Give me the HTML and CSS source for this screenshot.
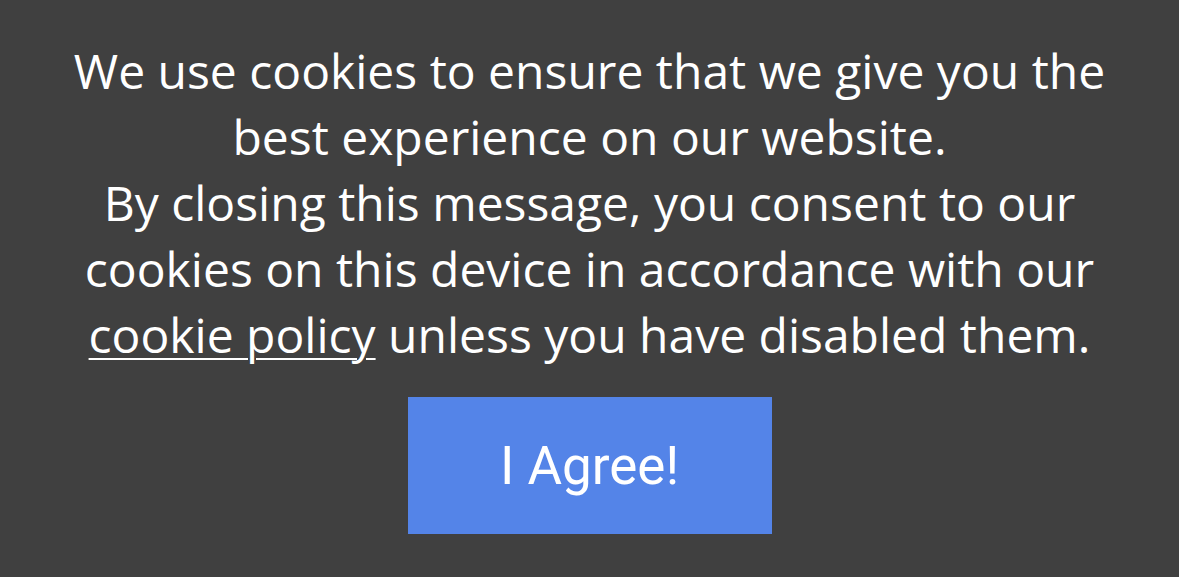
FILE: index.html
```html
<!DOCTYPE html>
<html>
<head>
<meta charset="utf-8">
<link rel="stylesheet" href="styles.css">
</head>
<body>
<div class="banner">
  <p class="message">We use cookies to ensure that we give you the best experience on our website.<br>By closing this message, you consent to our cookies on this device in accordance with our <a href="#" class="policy">cookie policy</a> unless you have disabled them.</p>
  <button class="agree">I Agree!</button>
</div>
</body>
</html>
```
FILE: styles.css
```css
html, body {
  margin: 0;
  padding: 0;
  background: #404040;
}
.banner {
  width: 1179px;
  height: 577px;
  display: flex;
  flex-direction: column;
  align-items: center;
  padding-top: 38px;
  box-sizing: border-box;
}
.message {
  margin: 0;
  width: 1080px;
  text-align: center;
  color: #ffffff;
  font-family: "Open Sans", sans-serif;
  font-size: 48px;
  line-height: 66px;
}
.policy {
  color: #ffffff;
  text-decoration: underline;
  text-underline-offset: 5px;
  text-decoration-thickness: 2px;
}
.agree {
  margin-top: 29px;
  width: 364px;
  height: 137px;
  border: none;
  background: #5484e8;
  color: #ffffff;
  font-family: Roboto, sans-serif;
  font-size: 53px;
  padding: 0;
}
```
